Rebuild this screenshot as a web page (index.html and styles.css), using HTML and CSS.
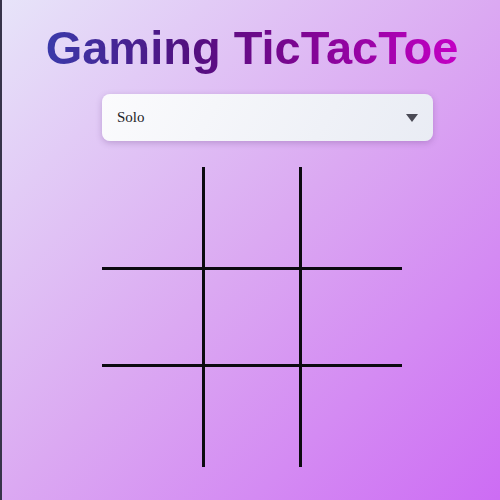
FILE: index.html
```html
<!DOCTYPE html>
<html>
<head>
<meta charset="utf-8">
<link rel="stylesheet" href="styles.css">
</head>
<body>
<div class="page">
  <h1 class="title">Gaming TicTacToe</h1>
  <div class="column">
    <div class="select">
      <span class="select-text">Solo</span>
      <svg class="caret" width="12" height="8" viewBox="0 0 12 8"><path d="M0 0H12L6 8Z" fill="#4a4a55"/></svg>
    </div>
    <div class="board">
      <div class="cell"></div><div class="cell mid-col"></div><div class="cell"></div>
      <div class="cell mid-row"></div><div class="cell mid-col mid-row"></div><div class="cell mid-row"></div>
      <div class="cell"></div><div class="cell mid-col"></div><div class="cell"></div>
    </div>
  </div>
</div>
</body>
</html>
```

FILE: styles.css
```css
html, body {
  margin: 0;
  padding: 0;
  height: 100%;
}
body {
  background: linear-gradient(135deg, #e7e4f9 0%, #dba9f2 50%, #cd6cf4 100%);
  overflow: hidden;
}
.page {
  box-sizing: border-box;
  min-height: 100%;
  border-left: 2px solid #37344a;
  padding-left: 2px;
  display: flex;
  flex-direction: column;
  align-items: center;
}
.title {
  margin: 21px 0 0 0;
  font-family: "Liberation Sans", Arial, sans-serif;
  font-weight: bold;
  font-size: 47px;
  line-height: 53px;
  background: linear-gradient(90deg, #3a3aaa 0%, #52107f 35%, #7a0690 60%, #c400c4 100%);
  -webkit-background-clip: text;
  background-clip: text;
  color: transparent;
}
.column {
  width: 300px;
  display: flex;
  flex-direction: column;
  align-items: flex-start;
}
.select {
  box-sizing: border-box;
  margin-top: 20px;
  width: 331px;
  height: 47px;
  border-radius: 8px;
  background: linear-gradient(120deg, #fbfbfd 0%, #e9ecf4 100%);
  box-shadow: 0 2px 6px rgba(80, 40, 110, 0.25);
  padding: 0 15px 0 15px;
  display: flex;
  align-items: center;
  justify-content: space-between;
}
.select-text {
  font-family: "Liberation Serif", "Times New Roman", serif;
  font-size: 15px;
  color: #222226;
}
.caret {
  display: block;
}
.board {
  margin-top: 26px;
  display: grid;
  grid-template-columns: repeat(3, 100px);
  grid-template-rows: repeat(3, 100px);
}
.cell {
  box-sizing: border-box;
}
.mid-col {
  border-left: 3px solid #0c0a10;
  border-right: 3px solid #0c0a10;
}
.mid-row {
  border-top: 3px solid #0c0a10;
  border-bottom: 3px solid #0c0a10;
}
```
